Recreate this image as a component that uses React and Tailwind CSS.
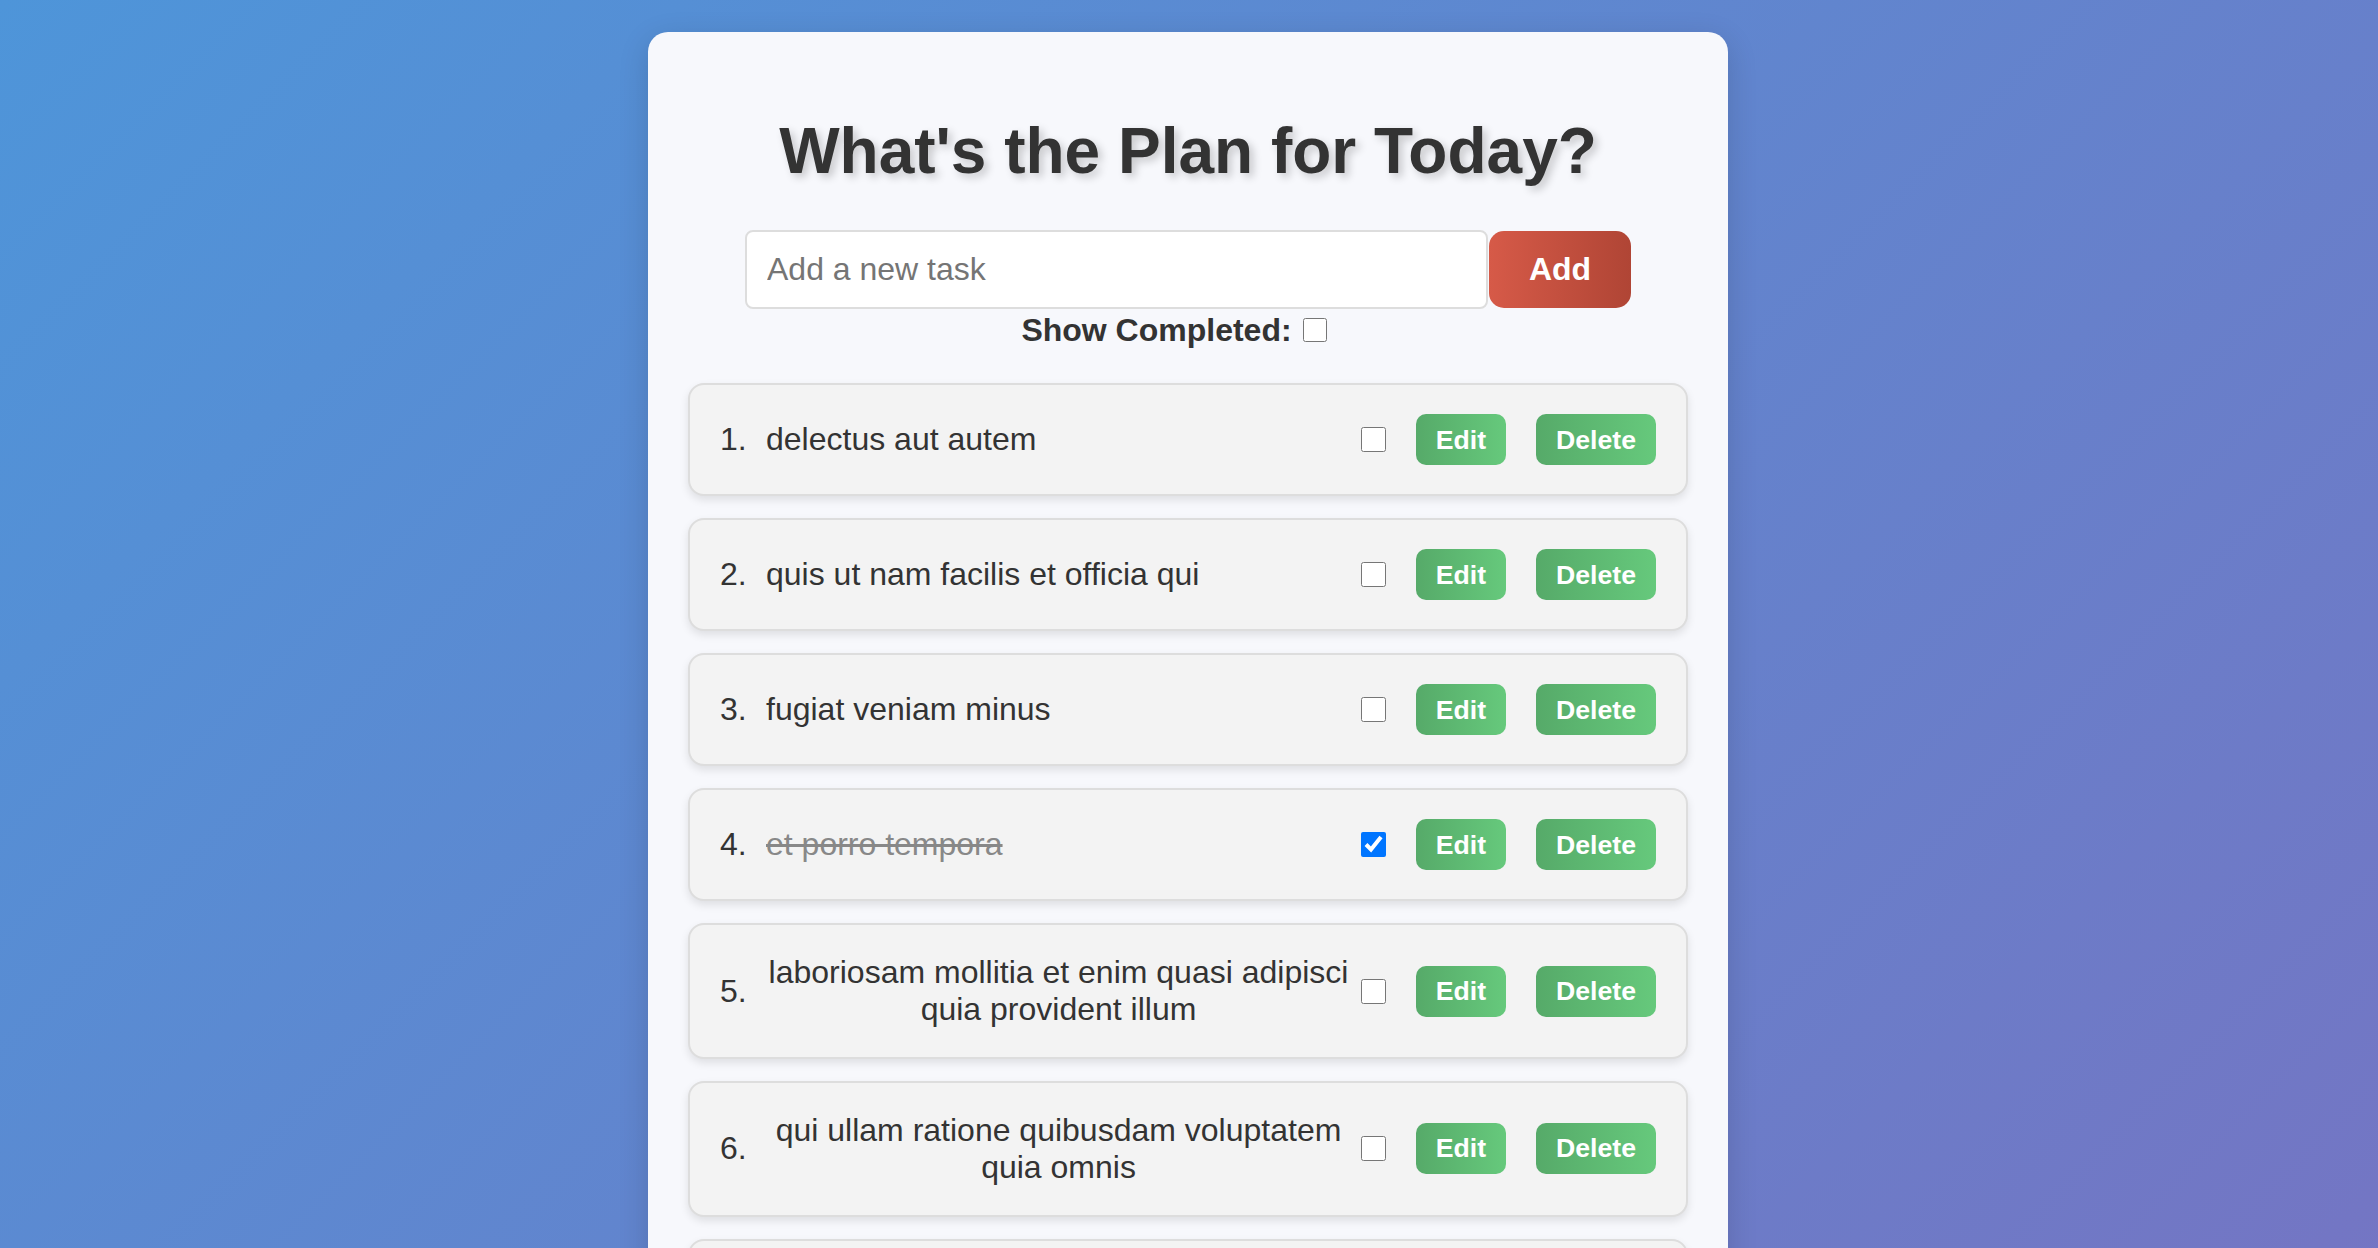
import React, { useState } from 'react';

const initialTodos = [
  { id: 1, title: 'delectus aut autem', completed: false },
  { id: 2, title: 'quis ut nam facilis et officia qui', completed: false },
  { id: 3, title: 'fugiat veniam minus', completed: false },
  { id: 4, title: 'et porro tempora', completed: true },
  { id: 5, title: 'laboriosam mollitia et enim quasi adipisci quia provident illum', completed: false },
  { id: 6, title: 'qui ullam ratione quibusdam voluptatem quia omnis', completed: false },
  { id: 7, title: 'illo expedita consequatur quia in', completed: false },
  { id: 8, title: 'quo adipisci enim quam ut ab', completed: true },
  { id: 9, title: 'molestiae perspiciatis ipsa', completed: false },
  { id: 10, title: 'illo est ratione doloremque quia maiores aut', completed: true },
];

const TodoItem = ({ index, todo, onToggle }) => (
  <li className="flex items-center mb-[22px] px-[30px] py-[29px] bg-[#f3f3f3] border-2 border-[#dddddd] rounded-[16px] shadow-[0_4px_8px_rgba(0,0,0,0.1)]">
    <span className="shrink-0 w-[26px] mr-[20px] text-left">{index + 1}.</span>
    <span className={`min-w-0 mr-[10px] text-center ${todo.completed ? 'line-through text-[#888888]' : ''}`}>
      {todo.title}
    </span>
    <input
      type="checkbox"
      checked={todo.completed}
      onChange={() => onToggle(todo.id)}
      className="shrink-0 ml-auto w-[25px] h-[25px]"
    />
    <button className="shrink-0 ml-[30px] w-[90px] h-[51px] rounded-[10px] bg-[linear-gradient(to_right,#56aa69,#66c97c)] text-white font-bold text-[26.67px] leading-[30.67px]">
      Edit
    </button>
    <button className="shrink-0 ml-[30px] w-[120px] h-[51px] rounded-[10px] bg-[linear-gradient(to_right,#56aa69,#66c97c)] text-white font-bold text-[26.67px] leading-[30.67px]">
      Delete
    </button>
  </li>
);

export default function App() {
  const [todos, setTodos] = useState(initialTodos);
  const [showCompleted, setShowCompleted] = useState(false);
  const [text, setText] = useState('');

  const toggle = (id) => {
    setTodos((prev) => prev.map((t) => (t.id === id ? { ...t, completed: !t.completed } : t)));
  };

  return (
    <div className="min-h-screen pt-[32px] pb-[32px] bg-[linear-gradient(135deg,#4e95d9,#7a70c0)] font-['Liberation_Sans',Arial,sans-serif] text-[#333333]">
      <div className="w-[1080px] ml-[calc(50%-541px)] px-[40px] pt-[40px] pb-[40px] bg-[#f7f8fc] rounded-[20px] shadow-[0_8px_30px_rgba(0,0,0,0.15)] text-center text-[32px] leading-[36.8px]">
        <h1 className="mt-[43px] mb-[41px] text-[64px] leading-[73.6px] font-bold text-[#333333] [text-shadow:4px_4px_8px_rgba(0,0,0,0.2)]">
          What's the Plan for Today?
        </h1>

        <div className="flex items-center justify-center">
          <input
            type="text"
            value={text}
            onChange={(e) => setText(e.target.value)}
            placeholder="Add a new task"
            className="w-[743px] h-[79px] px-[20px] bg-white border-2 border-[#dddddd] rounded-[8px] text-[32px] text-[#333333] placeholder:text-[#757575] outline-none"
          />
          <button className="w-[142px] h-[77px] ml-[1px] rounded-[15px] bg-[linear-gradient(to_right,#d65a48,#b04535)] text-white font-bold text-[32px] leading-[36.8px]">
            Add
          </button>
        </div>

        <div className="flex justify-center mt-[3px] pr-[28px]">
          <label className="flex items-center font-bold">
            Show Completed:
            <input
              type="checkbox"
              checked={showCompleted}
              onChange={() => setShowCompleted(!showCompleted)}
              className="ml-[11px] w-[24px] h-[24px]"
            />
          </label>
        </div>

        <ul className="mt-[35px]">
          {todos.map((todo, i) => (
            <TodoItem key={todo.id} index={i} todo={todo} onToggle={toggle} />
          ))}
        </ul>
      </div>
    </div>
  );
}
